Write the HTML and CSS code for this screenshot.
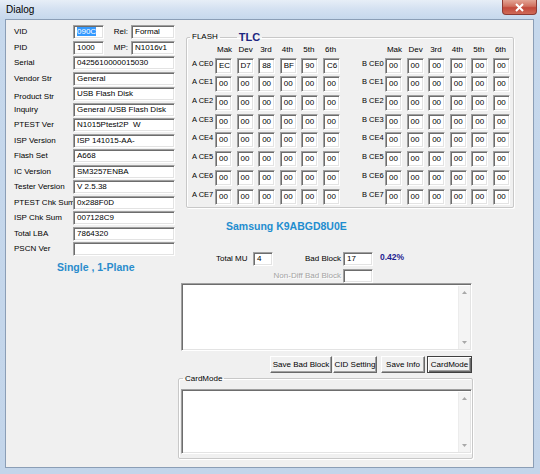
FILE: index.html
```html
<!DOCTYPE html>
<html lang="en">
<head>
    <meta charset="UTF-8">
    <meta name="viewport" content="width=device-width, initial-scale=1.0">
    <title>Dialog</title>
    <link rel="stylesheet" href="styles.css">
</head>
<body>
    <div class="window">
        <div class="titlebar">
            <span class="title">Dialog</span>
            <button class="close-btn" aria-label="Close">
                <svg width="11" height="9" viewBox="0 0 11 9"><path d="M2 1 L9 8 M9 1 L2 8" stroke="#fff" stroke-width="2"/></svg>
            </button>
        </div>

        <div class="client">
            <!-- Device info column -->
            <div class="info-col">
                <div class="info-grid">
                    <span class="lbl">VID</span>
                    <div class="pair">
                        <div class="field short"><span class="sel">090C</span></div>
                        <span class="pair-lbl">Rel:</span>
                        <div class="field rel">Formal</div>
                    </div>
                    <span class="lbl">PID</span>
                    <div class="pair">
                        <div class="field short">1000</div>
                        <span class="pair-lbl">MP:</span>
                        <div class="field rel">N1016v1</div>
                    </div>
                    <span class="lbl">Serial</span>
                    <div class="field">0425610000015030</div>
                    <span class="lbl">Vendor Str</span>
                    <div class="field">General</div>
                    <span class="lbl low">Product Str</span>
                    <div class="field">USB Flash Disk</div>
                    <span class="lbl">Inquiry</span>
                    <div class="field">General /USB Flash Disk</div>
                    <span class="lbl">PTEST Ver</span>
                    <div class="field">N1015Ptest2P&nbsp; W</div>
                    <span class="lbl">ISP Version</span>
                    <div class="field">ISP 141015-AA-</div>
                    <span class="lbl">Flash Set</span>
                    <div class="field">A668</div>
                    <span class="lbl">IC Version</span>
                    <div class="field">SM3257ENBA</div>
                    <span class="lbl">Tester Version</span>
                    <div class="field">V 2.5.38</div>
                    <span class="lbl">PTEST Chk Sum</span>
                    <div class="field">0x288F0D</div>
                    <span class="lbl">ISP Chk Sum</span>
                    <div class="field">007128C9</div>
                    <span class="lbl">Total LBA</span>
                    <div class="field">7864320</div>
                    <span class="lbl">PSCN Ver</span>
                    <div class="field"></div>
                </div>
                <div class="plane">Single , 1-Plane</div>
            </div>

            <!-- Flash ID column -->
            <div class="flash-col">
                <fieldset class="group flash">
                    <legend><span>FLASH</span><span class="legend-line"></span><span class="tlc">TLC</span></legend>
                    <div class="flash-body">
                        <div class="id-grid">
                            <span></span><span class="hd">Mak</span><span class="hd">Dev</span><span class="hd">3rd</span><span class="hd">4th</span><span class="hd">5th</span><span class="hd">6th</span>
                            <span class="ce">A CE0</span><div class="cell">EC</div><div class="cell">D7</div><div class="cell">88</div><div class="cell">BF</div><div class="cell">90</div><div class="cell">C6</div>
                            <span class="ce">A CE1</span><div class="cell">00</div><div class="cell">00</div><div class="cell">00</div><div class="cell">00</div><div class="cell">00</div><div class="cell">00</div>
                            <span class="ce">A CE2</span><div class="cell">00</div><div class="cell">00</div><div class="cell">00</div><div class="cell">00</div><div class="cell">00</div><div class="cell">00</div>
                            <span class="ce">A CE3</span><div class="cell">00</div><div class="cell">00</div><div class="cell">00</div><div class="cell">00</div><div class="cell">00</div><div class="cell">00</div>
                            <span class="ce">A CE4</span><div class="cell">00</div><div class="cell">00</div><div class="cell">00</div><div class="cell">00</div><div class="cell">00</div><div class="cell">00</div>
                            <span class="ce">A CE5</span><div class="cell">00</div><div class="cell">00</div><div class="cell">00</div><div class="cell">00</div><div class="cell">00</div><div class="cell">00</div>
                            <span class="ce">A CE6</span><div class="cell">00</div><div class="cell">00</div><div class="cell">00</div><div class="cell">00</div><div class="cell">00</div><div class="cell">00</div>
                            <span class="ce">A CE7</span><div class="cell">00</div><div class="cell">00</div><div class="cell">00</div><div class="cell">00</div><div class="cell">00</div><div class="cell">00</div>
                        </div>
                        <div class="id-grid">
                            <span></span><span class="hd">Mak</span><span class="hd">Dev</span><span class="hd">3rd</span><span class="hd">4th</span><span class="hd">5th</span><span class="hd">6th</span>
                            <span class="ce">B CE0</span><div class="cell">00</div><div class="cell">00</div><div class="cell">00</div><div class="cell">00</div><div class="cell">00</div><div class="cell">00</div>
                            <span class="ce">B CE1</span><div class="cell">00</div><div class="cell">00</div><div class="cell">00</div><div class="cell">00</div><div class="cell">00</div><div class="cell">00</div>
                            <span class="ce">B CE2</span><div class="cell">00</div><div class="cell">00</div><div class="cell">00</div><div class="cell">00</div><div class="cell">00</div><div class="cell">00</div>
                            <span class="ce">B CE3</span><div class="cell">00</div><div class="cell">00</div><div class="cell">00</div><div class="cell">00</div><div class="cell">00</div><div class="cell">00</div>
                            <span class="ce">B CE4</span><div class="cell">00</div><div class="cell">00</div><div class="cell">00</div><div class="cell">00</div><div class="cell">00</div><div class="cell">00</div>
                            <span class="ce">B CE5</span><div class="cell">00</div><div class="cell">00</div><div class="cell">00</div><div class="cell">00</div><div class="cell">00</div><div class="cell">00</div>
                            <span class="ce">B CE6</span><div class="cell">00</div><div class="cell">00</div><div class="cell">00</div><div class="cell">00</div><div class="cell">00</div><div class="cell">00</div>
                            <span class="ce">B CE7</span><div class="cell">00</div><div class="cell">00</div><div class="cell">00</div><div class="cell">00</div><div class="cell">00</div><div class="cell">00</div>
                        </div>
                    </div>
                </fieldset>

                <div class="chip">Samsung K9ABGD8U0E</div>

                <div class="stats">
                    <span class="mu-lbl">Total MU</span>
                    <div class="field mu">4</div>
                    <span class="bb-lbl">Bad Block</span>
                    <div class="field bb">17</div>
                    <span class="pct">0.42%</span>
                </div>
                <div class="stats nondiff">
                    <span class="bb-lbl disabled">Non-Diff Bad Block</span>
                    <div class="field bb"></div>
                </div>

                <div class="memo log">
                    <div class="memo-area"></div>
                    <div class="vscroll">
                        <svg width="5" height="3" viewBox="0 0 5 3"><path d="M0 3 L2.5 0 L5 3 Z" fill="#a8a8a8"/></svg>
                        <svg width="5" height="3" viewBox="0 0 5 3"><path d="M0 0 L2.5 3 L5 0 Z" fill="#a8a8a8"/></svg>
                    </div>
                </div>

                <div class="btn-row">
                    <button class="btn save-bad">Save Bad Block</button>
                    <button class="btn cid">CID Setting</button>
                    <button class="btn save-info">Save Info</button>
                    <button class="btn card default">CardMode</button>
                </div>

                <fieldset class="group cardmode">
                    <legend>CardMode</legend>
                    <div class="memo">
                        <div class="memo-area"></div>
                        <div class="vscroll">
                            <svg width="5" height="3" viewBox="0 0 5 3"><path d="M0 3 L2.5 0 L5 3 Z" fill="#a8a8a8"/></svg>
                            <svg width="5" height="3" viewBox="0 0 5 3"><path d="M0 0 L2.5 3 L5 0 Z" fill="#a8a8a8"/></svg>
                        </div>
                    </div>
                </fieldset>
            </div>
        </div>
    </div>
</body>
</html>
```

FILE: styles.css
```css
* {
    box-sizing: border-box;
}
body {
    margin: 0;
    font-family: "Liberation Sans", Arial, sans-serif;
    font-size: 8px;
    color: #000;
    background: #c4d6eb;
}
.window {
    width: 540px;
    height: 474px;
    display: flex;
    flex-direction: column;
    padding: 0 6px 6px 5px;
    background: linear-gradient(to bottom, #e7eef7 0, #d4e1f1 9px, #c6d8ec 19px, #c3d5ea 100%);
}
.titlebar {
    height: 19px;
    display: flex;
    align-items: flex-start;
    margin-right: -3px;
}
.title {
    font-size: 10px;
    line-height: 19px;
    padding-left: 1px;
}
.close-btn {
    margin-left: auto;
    width: 35px;
    height: 15px;
    padding: 0;
    border: 1px solid #8c3a33;
    border-top: none;
    border-radius: 0 0 4px 4px;
    background: linear-gradient(to bottom, #e3a595 0, #d0705f 45%, #c2493b 55%, #cf6a57 100%);
    display: flex;
    align-items: center;
    justify-content: center;
}
.client {
    flex: 1;
    display: flex;
    align-items: flex-start;
    background: #f0f0f0;
    border: 1px solid #8b9eb6;
}

/* sunken edit box */
.field {
    height: 14px;
    background: #fff;
    border: 1px solid;
    border-color: #a0a0a0 #fff #fff #a0a0a0;
    box-shadow: inset 1px 1px #6d6d6d, inset -1px -1px #e3e3e3;
    padding-left: 3px;
    line-height: 12px;
    white-space: nowrap;
    overflow: hidden;
}
.sel {
    background: #3399ff;
    color: #fff;
}

/* left column */
.info-col {
    width: 172px;
    padding: 5px 0 0 8px;
}
.info-grid {
    display: grid;
    grid-template-columns: 59px 102px;
    grid-auto-rows: 14px;
    row-gap: 1.5px;
    align-items: center;
}
.lbl {
    line-height: 10px;
    white-space: nowrap;
}
.lbl.low {
    padding-top: 5px;
}
.pair {
    display: flex;
    height: 14px;
}
.field.short {
    width: 31px;
}
.pair-lbl {
    flex: 1;
    text-align: right;
    padding-right: 3px;
    line-height: 14px;
}
.field.rel {
    width: 44px;
}
.plane {
    margin: 5px 0 0 43px;
    font-size: 10.5px;
    line-height: 12px;
    font-weight: bold;
    color: #2a8ccc;
}

/* right column */
.flash-col {
    flex: 1;
    display: flex;
    flex-direction: column;
    align-items: flex-start;
}
.group {
    margin: 0;
    border: 1px solid #c8c8c8;
    border-radius: 2px;
    box-shadow: 1px 1px #fff, inset 1px 1px #fff;
    min-inline-size: 0;
}
.group legend {
    padding: 0 2px;
    line-height: 10px;
}
.flash {
    margin: 11px 0 0 8px;
    width: 328px;
    padding: 2px 0 2px 5px;
}
.flash legend {
    display: flex;
    align-items: center;
    margin-left: -2px;
    line-height: 12px;
}
.legend-line {
    width: 17px;
    margin: 0 2px;
    border-top: 1px solid #c8c8c8;
}
.tlc {
    font-size: 11px;
    font-weight: bold;
    color: #1c2580;
}
.flash-body {
    display: flex;
    gap: 22px;
}
.id-grid {
    display: grid;
    grid-template-columns: 18.4px repeat(6, 17px);
    grid-template-rows: 10px repeat(8, 16px);
    column-gap: 4.6px;
    row-gap: 2.7px;
}
.hd {
    line-height: 10px;
    padding-left: 2px;
}
.ce {
    font-size: 7.5px;
    line-height: 10px;
    padding-top: 1px;
    white-space: nowrap;
}
.cell {
    background: #fff;
    border: 1px solid;
    border-color: #a0a0a0 #fff #fff #a0a0a0;
    box-shadow: inset 1px 1px #6d6d6d, inset -1px -1px #e3e3e3;
    padding-left: 3px;
    line-height: 14px;
}
.chip {
    margin: 12px 0 0 48px;
    font-size: 10.5px;
    line-height: 12px;
    font-weight: bold;
    color: #1f8dcf;
}
.stats {
    display: flex;
    align-items: center;
    margin: 20px 0 0 38px;
}
.mu-lbl {
    width: 37px;
}
.field.mu {
    width: 20px;
}
.bb-lbl {
    width: 70px;
    text-align: right;
    padding-right: 2px;
    white-space: nowrap;
}
.field.bb {
    width: 30px;
}
.pct {
    margin: 0 0 4px 7px;
    font-size: 8.5px;
    font-weight: bold;
    color: #1e2290;
}
.stats.nondiff {
    margin: 3px 0 0 95px;
}
.disabled {
    color: #a3a3a3;
    text-shadow: 1px 1px #fff;
}

/* multi-line memo with disabled scrollbar */
.memo {
    display: flex;
    width: 291px;
    height: 65px;
    background: #fff;
    border: 1px solid;
    border-color: #a0a0a0 #fff #fff #a0a0a0;
    box-shadow: inset 1px 1px #6d6d6d, inset -1px -1px #e3e3e3;
    padding: 2px 1px 1px 2px;
}
.memo.log {
    margin-left: 3px;
    height: 68px;
}
.memo-area {
    flex: 1;
}
.vscroll {
    width: 12px;
    background: #f4f4f4;
    border-left: 1px solid #ececec;
    display: flex;
    flex-direction: column;
    align-items: center;
    justify-content: space-between;
    padding: 5px 0 5px;
}
.vscroll svg {
    display: block;
}

.btn-row {
    margin-top: 5px;
    width: 295px;
    padding-right: 1px;
    display: flex;
    justify-content: flex-end;
}
.btn {
    height: 17px;
    padding: 0;
    font: inherit;
    color: #000;
    background: #f0f0f0;
    border: 1px solid;
    border-color: #fff #696969 #696969 #fff;
    box-shadow: inset -1px -1px #a0a0a0;
}
.btn.default {
    border-color: #404040;
    box-shadow: inset 1px 1px #fff, inset -1px -1px #696969, inset -2px -2px #a0a0a0;
}
.save-bad {
    width: 62px;
    margin-right: 1px;
}
.cid {
    width: 44px;
    margin-right: 4px;
}
.save-info {
    width: 44px;
    margin-right: 2px;
}
.card {
    width: 45px;
}
.cardmode {
    margin-top: 1px;
    width: 295px;
    padding: 5px 0 4px 2px;
}
.cardmode legend {
    margin-left: 2px;
}
```
